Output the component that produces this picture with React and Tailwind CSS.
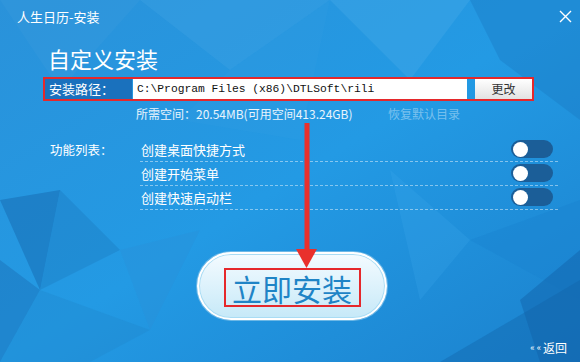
import React from 'react';

const cjk = { fontFamily: '"Microsoft YaHei", "Noto Sans CJK SC", "Noto Sans", sans-serif' };

const features = ['创建桌面快捷方式', '创建开始菜单', '创建快速启动栏'];

const Toggle = () => (
  <div className="w-[42px] h-[18px] rounded-full bg-[#1b5e98] flex items-center self-start mt-[2px] mr-[5px]">
    <div className="w-[15px] h-[15px] rounded-full bg-white ml-[2px]" />
  </div>
);

// low-poly backdrop
const Backdrop = () => (
  <svg className="absolute inset-0" width="580" height="362" viewBox="0 0 580 362">
    <defs>
      <linearGradient id="bg" x1="0" y1="0" x2="1" y2="1">
        <stop offset="0" stopColor="#2a92da" />
        <stop offset="0.5" stopColor="#239ae4" />
        <stop offset="1" stopColor="#1b82ce" />
      </linearGradient>
    </defs>
    <rect width="580" height="362" fill="url(#bg)" />
    <polygon points="0,0 140,0 60,90" fill="#3a9ade" opacity="0.35" />
    <polygon points="140,0 330,0 230,70" fill="#47a7e6" opacity="0.3" />
    <polygon points="330,0 470,0 410,80" fill="#58b2ea" opacity="0.25" />
    <polygon points="470,0 580,0 580,120 500,60" fill="#1b7cc6" opacity="0.45" />
    <polygon points="0,200 60,190 40,290" fill="#1569b0" opacity="0.5" />
    <polygon points="0,260 40,290 0,362" fill="#1a6fb6" opacity="0.45" />
    <polygon points="60,190 120,250 40,290" fill="#1c7ac0" opacity="0.4" />
    <polygon points="40,290 150,330 90,362 0,362" fill="#1f86cc" opacity="0.35" />
    <polygon points="120,250 200,230 150,330" fill="#2a8fd6" opacity="0.35" />
    <polygon points="390,170 470,240 420,300" fill="#3aa6ea" opacity="0.25" />
    <polygon points="470,240 580,200 580,300" fill="#1a82cf" opacity="0.4" />
    <polygon points="440,362 580,280 580,362" fill="#146db5" opacity="0.55" />
    <polygon points="520,300 580,250 580,362 540,362" fill="#1262a8" opacity="0.45" />
    <polygon points="230,70 330,0 300,140 180,120" fill="#3aa0e4" opacity="0.18" />
  </svg>
);

export default function App() {
  return (
    <div className="relative w-[580px] h-[362px] overflow-hidden text-white" style={cjk}>
      <Backdrop />

      <div className="relative flex flex-col">
        {/* header */}
        <div className="h-[34px] flex items-start justify-between pl-[17px] pr-[8px] pt-[9px]">
          <span className="text-[13px] leading-[16px]">人生日历-安装</span>
          <svg width="13" height="13" viewBox="0 0 13 13" className="mt-[1px]">
            <path d="M1 1 L12 12 M12 1 L1 12" stroke="white" strokeWidth="1.4" />
          </svg>
        </div>

        <div className="ml-[48px] mt-[10px] text-[22px] leading-[28px]">自定义安装</div>

        {/* path row */}
        <div className="ml-[43px] mt-[5px] w-[491px] h-[24px] border-2 border-[#e5282b] flex">
          <div className="w-[87px] bg-[#1a71bd] flex items-center pl-[4px] text-[13px] leading-[16px]">安装路径：</div>
          <div className="ml-[1px] w-[334px] bg-white flex items-center pl-[4px] text-[#111] text-[11.3px]" style={{ fontFamily: '"Liberation Mono", monospace' }}>
            C:\Program Files (x86)\DTLSoft\rili
          </div>
          <div className="w-[8px]" />
          <div className="flex-1 bg-gradient-to-b from-white to-[#e2e2e2] flex items-center justify-center text-[12px] text-[#333]">
            更改
          </div>
        </div>

        {/* space info */}
        <div className="ml-[136px] mt-[5px] flex text-[12px] leading-[16px]">
          <span className="w-[252px] text-white/90">所需空间：20.54MB(可用空间413.24GB)</span>
          <span className="text-white/40">恢复默认目录</span>
        </div>

        {/* features */}
        <div className="mt-[16px] flex">
          <div className="w-[140px] pl-[50px] h-[24px] flex items-center text-[12.5px] leading-[16px]">功能列表：</div>
          <div className="w-[418px] flex flex-col">
            {features.map((f) => (
              <div key={f} className="h-[24px] flex items-center justify-between border-b border-dashed border-white/45">
                <span className="pl-[1px] text-[13px] leading-[16px]">{f}</span>
                <Toggle />
              </div>
            ))}
          </div>
        </div>

        {/* install button */}
        <div className="ml-[197px] mt-[42px] w-[190px] h-[68px] rounded-full border-2 border-white shadow-[0_0_0_1px_#6db8e6,inset_0_0_0_1px_#a9dcf4] bg-gradient-to-b from-[#f4fbff] to-[#c6e9f8] flex items-center justify-center pt-[3px]">
          <div className="w-[137px] h-[39px] border-2 border-[#e5282b] flex items-center justify-center text-[30px] leading-[34px] text-[#1f84c6]">
            立即安装
          </div>
        </div>

        <div className="mt-[20px] flex justify-end pr-[13px] items-center leading-[16px]">
          <span className="text-[9px] mr-[2px]">« «</span>
          <span className="text-[12px]">返回</span>
        </div>
      </div>

      {/* red annotation arrow */}
      <svg className="absolute left-[296px] top-[123px]" width="22" height="147" viewBox="0 0 22 147">
        <rect x="8.5" y="0" width="5" height="129" fill="#e9302c" />
        <polygon points="0,126 21,126 10.5,145" fill="#e9302c" />
      </svg>
    </div>
  );
}
